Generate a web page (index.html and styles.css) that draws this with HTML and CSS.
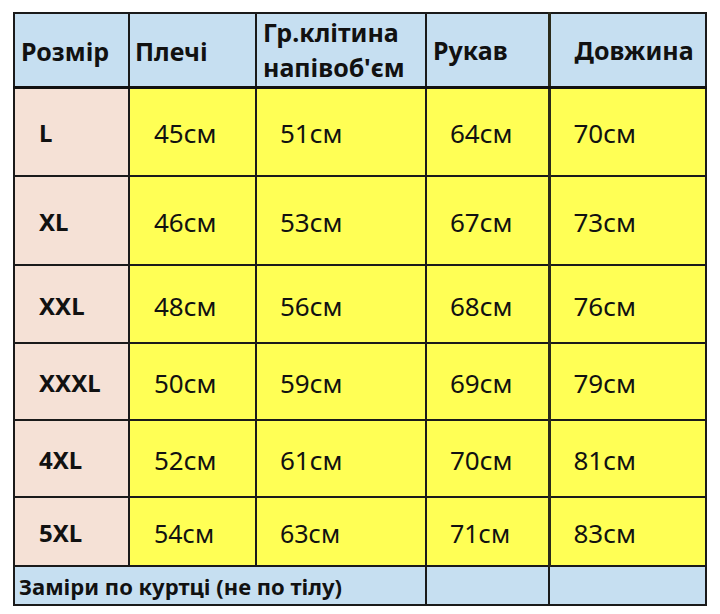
FILE: index.html
```html
<!DOCTYPE html>
<html lang="uk">
<head>
<meta charset="utf-8">
<link rel="stylesheet" href="styles.css">
</head>
<body>
<table class="sizes">
  <colgroup>
    <col class="c1"><col class="c2"><col class="c3"><col class="c4"><col class="c5">
  </colgroup>
  <thead>
    <tr class="head">
      <th class="h-size">Розмір</th>
      <th class="h-shoulder">Плечі</th>
      <th class="h-chest">Гр.клітина<br>напівоб'єм</th>
      <th class="h-sleeve">Рукав</th>
      <th class="h-length">Довжина</th>
    </tr>
  </thead>
  <tbody>
    <tr class="r1"><td class="size">L</td><td class="v v2">45см</td><td class="v v3">51см</td><td class="v v4">64см</td><td class="v v5">70см</td></tr>
    <tr class="r2"><td class="size">XL</td><td class="v v2">46см</td><td class="v v3">53см</td><td class="v v4">67см</td><td class="v v5">73см</td></tr>
    <tr class="r3"><td class="size">XXL</td><td class="v v2">48см</td><td class="v v3">56см</td><td class="v v4">68см</td><td class="v v5">76см</td></tr>
    <tr class="r4"><td class="size">XXXL</td><td class="v v2">50см</td><td class="v v3">59см</td><td class="v v4">69см</td><td class="v v5">79см</td></tr>
    <tr class="r5"><td class="size">4XL</td><td class="v v2">52см</td><td class="v v3">61см</td><td class="v v4">70см</td><td class="v v5">81см</td></tr>
    <tr class="r6"><td class="size">5XL</td><td class="v v2 small">54см</td><td class="v v3 small">63см</td><td class="v v4 small">71см</td><td class="v v5">83см</td></tr>
    <tr class="foot"><td class="note" colspan="3">Заміри по куртці (не по тілу)</td><td class="blank"></td><td class="blank"></td></tr>
  </tbody>
</table>
</body>
</html>
```
FILE: styles.css
```css
html, body {
  margin: 0;
  padding: 0;
  background: #ffffff;
}
body {
  padding: 12px 0 0 13px;
  font-family: "Noto Sans", "Open Sans", sans-serif;
  color: #111;
}
.sizes {
  border-collapse: collapse;
  table-layout: fixed;
  width: 692px;
}
.c1 { width: 115px; }
.c2 { width: 127px; }
.c3 { width: 170px; }
.c4 { width: 123px; }
.c5 { width: 157px; }

.sizes th, .sizes td {
  border: 2px solid #1a1a1a;
  padding: 0;
  text-align: left;
  vertical-align: middle;
  overflow: visible;
}
.sizes td:nth-child(5), .sizes th:nth-child(5) {
  border-left: 3px solid #2a2a1a;
}
.head {
  height: 74px;
}
.head th {
  background: #c6dff1;
  font-weight: 700;
  font-size: 25px;
  line-height: 32px;
  border-bottom: 3px solid #111;
}
.h-size { padding-left: 6px !important; padding-top: 2px !important; }
.h-shoulder { padding-left: 5px !important; padding-top: 2px !important; }
.h-chest { padding-left: 6px !important; line-height: 35px !important; }
.h-sleeve { padding-left: 6px !important; }
.h-length { padding-left: 24px !important; }

.r1, .r2 { height: 89px; }
.r3 { height: 78px; }
.r4, .r5 { height: 77px; }
.r6 { height: 69px; }
.foot { height: 39px; }

.size {
  background: #f5e1d6;
  font-weight: 700;
  font-size: 24px;
  line-height: 30px;
  padding-left: 24px !important;
  padding-top: 3px !important;
}
.v {
  background: #ffff55;
  font-size: 26px;
  line-height: 30px;
  padding-top: 3px !important;
}
.v.small { font-size: 25px; }
.v2 { padding-left: 24px !important; }
.v3 { padding-left: 23px !important; }
.v4 { padding-left: 23px !important; }
.v5 { padding-left: 23px !important; }

.note {
  background: #c6dff1;
  font-weight: 700;
  font-size: 22px;
  line-height: 30px;
  padding-left: 4px !important;
  white-space: nowrap;
}
.blank {
  background: #c6dff1;
}
```
